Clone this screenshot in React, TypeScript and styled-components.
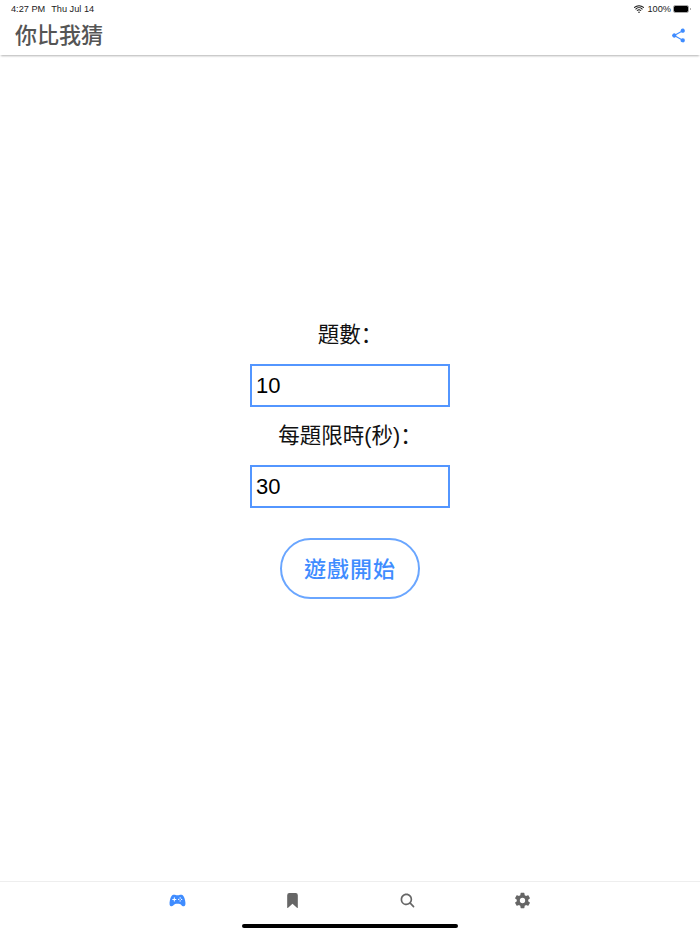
import React from 'react';
import styled, {createGlobalStyle} from 'styled-components';
import {
  IoBookmark,
  IoGameController,
  IoSearch,
  IoSettingsSharp,
  IoShareSocial,
  IoWifi,
} from 'react-icons/io5';

const BLUE = '#3f8cff';
const GREY = '#666666';
const SANS = `"Liberation Sans", "Noto Sans CJK TC", sans-serif`;

const GlobalStyle = createGlobalStyle`
  html, body {
    margin: 0;
    padding: 0;
    background: #fff;
    font-family: ${SANS};
  }
`;

const Page = styled.div`
  position: relative;
  display: flex;
  flex-direction: column;
  width: 700px;
  height: 934px;
  overflow: hidden;
`;

const StatusBar = styled.div`
  display: flex;
  align-items: center;
  justify-content: space-between;
  height: 17px;
  padding: 0 10px 0 11px;
  font-size: 9.2px;
  color: #222;
`;

const StatusGroup = styled.div`
  display: flex;
  align-items: center;
  gap: 3px;
`;

const StatusDate = styled.span`
  margin-left: 3px;
`;

const Battery = styled.div`
  position: relative;
  width: 14px;
  height: 6px;
  margin-right: 2px;
  border-radius: 1px;
  background: #000;
  outline: 1px solid #aaa;
  &::after {
    content: '';
    position: absolute;
    right: -3px;
    top: 2px;
    width: 1px;
    height: 2px;
    background: #aaa;
  }
`;

const Header = styled.header`
  display: flex;
  align-items: flex-start;
  justify-content: space-between;
  box-sizing: border-box;
  height: 38px;
  padding: 3px 13px 0 15px;
  box-shadow: 0 2px 2px -1px rgba(0, 0, 0, 0.3);
`;

const Title = styled.h1`
  margin: 0;
  font-size: 22px;
  line-height: 32px;
  font-weight: 500;
  color: #555;
`;

const ShareButton = styled.div`
  display: flex;
  margin-top: 7px;
  color: ${BLUE};
  font-size: 17px;
`;

const Main = styled.main`
  flex: 1;
  display: flex;
  flex-direction: column;
  align-items: center;
  padding-top: 265px;
`;

const FieldLabel = styled.label`
  height: 32px;
  line-height: 26px;
  margin-bottom: 12px;
  font-size: 21.5px;
  color: #111;
`;

// the colon sits on the left of its box in the SC face, as in the reference
const Colon = styled.span`
  font-family: "Noto Sans CJK SC", sans-serif;
`;

const NumberInput = styled.input`
  box-sizing: border-box;
  width: 200px;
  height: 43px;
  margin-bottom: 14px;
  padding: 0 4px;
  border: 2px solid #5396ff;
  border-radius: 0;
  outline: none;
  font-family: ${SANS};
  font-size: 22px;
  color: #000;
`;

const StartButton = styled.button`
  box-sizing: border-box;
  width: 140px;
  height: 61px;
  margin-top: 16px;
  padding: 0 0 4px;
  border: 2px solid #6aa6ff;
  border-radius: 31px;
  background: #fff;
  font-family: ${SANS};
  font-size: 22px;
  font-weight: 500;
  letter-spacing: 1px;
  color: ${BLUE};
`;

const TabBar = styled.nav`
  display: grid;
  grid-template-columns: repeat(4, 115px);
  justify-content: center;
  height: 52px;
  border-top: 1px solid #eeeeee;
`;

const Tab = styled.div<{$active?: boolean}>`
  display: flex;
  justify-content: center;
  padding-top: 10px;
  font-size: 17px;
  color: ${props => (props.$active ? BLUE : GREY)};
`;

const HomeIndicator = styled.div`
  position: absolute;
  left: 242px;
  bottom: 6px;
  width: 216px;
  height: 4px;
  border-radius: 2px;
  background: #000;
`;

const App = () => (
  <Page>
    <GlobalStyle />
    <StatusBar>
      <StatusGroup>
        <span>4:27 PM</span>
        <StatusDate>Thu Jul 14</StatusDate>
      </StatusGroup>
      <StatusGroup>
        <IoWifi size={12} color="#111" />
        <span>100%</span>
        <Battery />
      </StatusGroup>
    </StatusBar>
    <Header>
      <Title>你比我猜</Title>
      <ShareButton>
        <IoShareSocial />
      </ShareButton>
    </Header>
    <Main>
      <FieldLabel>
        題數<Colon>：</Colon>
      </FieldLabel>
      <NumberInput defaultValue="10" />
      <FieldLabel>
        每題限時(秒)<Colon>：</Colon>
      </FieldLabel>
      <NumberInput defaultValue="30" />
      <StartButton>遊戲開始</StartButton>
    </Main>
    <TabBar>
      <Tab $active>
        <IoGameController />
      </Tab>
      <Tab>
        <IoBookmark />
      </Tab>
      <Tab>
        <IoSearch />
      </Tab>
      <Tab>
        <IoSettingsSharp />
      </Tab>
    </TabBar>
    <HomeIndicator />
  </Page>
);

export default App;
